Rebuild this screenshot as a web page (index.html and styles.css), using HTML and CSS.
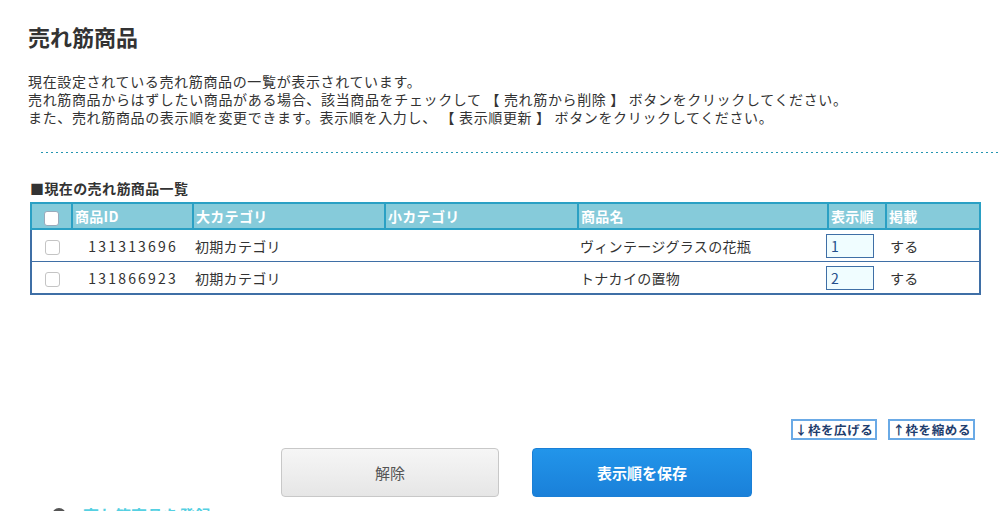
FILE: index.html
```html
<!DOCTYPE html>
<html lang="ja">
<head>
    <meta charset="UTF-8">
    <title>売れ筋商品</title>
    <link rel="stylesheet" href="styles.css">
</head>
<body>

<div class="page">
    <h1>売れ筋商品</h1>

    <p class="intro">
        現在設定されている売れ筋商品の一覧が表示されています。<br>
        売れ筋商品からはずしたい商品がある場合、該当商品をチェックして 【 売れ筋から削除 】 ボタンをクリックしてください。<br>
        また、売れ筋商品の表示順を変更できます。表示順を入力し、 【 表示順更新 】 ボタンをクリックしてください。
    </p>

    <div class="dotted"></div>

    <h2 class="list-title">■現在の売れ筋商品一覧</h2>

    <div class="frame" id="frame">
        <table class="ranking">
            <colgroup>
                <col class="c-check">
                <col class="c-id">
                <col class="c-cat1">
                <col class="c-cat2">
                <col class="c-name">
                <col class="c-order">
                <col class="c-pub">
            </colgroup>
            <thead>
                <tr>
                    <th class="check"><span class="box head"></span></th>
                    <th>商品ID</th>
                    <th>大カテゴリ</th>
                    <th>小カテゴリ</th>
                    <th>商品名</th>
                    <th>表示順</th>
                    <th>掲載</th>
                </tr>
            </thead>
            <tbody>
                <tr>
                    <td class="check"><span class="box"></span></td>
                    <td class="id">131313696</td>
                    <td>初期カテゴリ</td>
                    <td></td>
                    <td>ヴィンテージグラスの花瓶</td>
                    <td class="order"><input type="text" value="1"></td>
                    <td class="pub">する</td>
                </tr>
                <tr>
                    <td class="check"><span class="box"></span></td>
                    <td class="id">131866923</td>
                    <td>初期カテゴリ</td>
                    <td></td>
                    <td>トナカイの置物</td>
                    <td class="order"><input type="text" value="2"></td>
                    <td class="pub">する</td>
                </tr>
            </tbody>
        </table>
    </div>

    <div class="frame-ctrl">
        <button class="small-btn">↓枠を広げる</button>
        <button class="small-btn">↑枠を縮める</button>
    </div>

    <div class="actions">
        <button class="btn btn-gray">解除</button>
        <button class="btn btn-blue">表示順を保存</button>
    </div>

    <div class="next-section">
        <span class="dot"></span>
        <span class="next-title">売れ筋商品を登録</span>
    </div>
</div>

</body>
</html>
```

FILE: styles.css
```css
body {
    font-family: "Noto Sans CJK JP", "Noto Sans", sans-serif;
    margin: 0;
    padding: 0;
    background-color: white;
    color: #333;
    overflow: hidden;
}

.page {
    padding: 0 0 0 28px;
}

h1 {
    margin: 0;
    padding-top: 20px;
    font-size: 22px;
    line-height: 32px;
    font-weight: bold;
    color: #333;
}

.intro {
    margin: 20px 0 0;
    font-size: 14px;
    line-height: 18px;
    letter-spacing: 0.65px;
}

/* 点線の区切り */
.dotted {
    margin: 26px 0 0 13px;
    height: 1px;
    background: repeating-linear-gradient(to right, #2596b0 0 2px, transparent 2px 5px);
}

.list-title {
    margin: 26px 0 0 2px;
    font-size: 14px;
    line-height: 18px;
    font-weight: bold;
    letter-spacing: 0.4px;
}

.frame {
    margin: 5px 0 0 1px;
    padding-left: 1px;
    width: 960px;
    height: 214px;
    overflow: hidden;
}

.ranking {
    width: 949px;
    border-collapse: collapse;
    table-layout: fixed;
    font-size: 14px;
}

.c-check { width: 41px; }
.c-id { width: 121px; }
.c-cat1 { width: 192px; }
.c-cat2 { width: 193px; }
.c-name { width: 250px; }
.c-order { width: 58px; }
.c-pub { width: 94px; }

.ranking th {
    height: 24px;
    padding: 0 2px;
    background-color: #86cbda;
    border: 2px solid #2aa0c4;
    color: white;
    text-align: left;
    font-weight: bold;
    line-height: 22px;
    letter-spacing: 0.3px;
}

.ranking td {
    height: 31px;
    padding: 0 2px;
    border-top: 1px solid #3f6fa6;
    border-bottom: 1px solid #3f6fa6;
    line-height: 20px;
    letter-spacing: 0.3px;
}

.ranking tr td:first-child {
    border-left: 2px solid #3f6fa6;
}

.ranking tr td:last-child {
    border-right: 2px solid #3f6fa6;
}

.ranking tr:last-child td {
    border-bottom: 2px solid #3f6fa6;
}

.ranking .check {
    text-align: center;
    padding: 0;
}

.box {
    display: inline-block;
    width: 13px;
    height: 13px;
    border: 1px solid #c4c4c4;
    border-radius: 3px;
    background: white;
    vertical-align: middle;
}

.box.head {
    border-color: #9ab;
}

.ranking .id {
    text-align: right;
    padding-right: 15px;
    letter-spacing: 2.2px;
}

.ranking .order {
    padding: 0;
}

.ranking input {
    box-sizing: border-box;
    width: 48px;
    height: 24px;
    margin: 0 0 0 -2px;
    padding: 0 4px;
    border: 1px solid #3f6fa6;
    background-color: #f0fdff;
    color: #234f8c;
    font-family: inherit;
    font-size: 14px;
    vertical-align: middle;
}

.ranking .pub {
    padding-left: 4px;
}

.frame-ctrl {
    display: flex;
    justify-content: flex-end;
    gap: 11px;
    width: 947px;
    margin-top: 3px;
}

.small-btn {
    height: 21px;
    padding: 0 2px;
    border: 2px solid #6aaae6;
    background: white;
    color: #1f3e6e;
    font-family: inherit;
    font-size: 12.5px;
    font-weight: bold;
    letter-spacing: 0.6px;
    line-height: 17px;
}

.actions {
    display: flex;
    gap: 33px;
    margin: 8px 0 0 253px;
}

.btn {
    height: 49px;
    border-radius: 4px;
    font-family: inherit;
    font-size: 15px;
    cursor: pointer;
}

.btn-gray {
    width: 218px;
    border: 1px solid #c8c8c8;
    background: linear-gradient(#f6f6f6, #e6e6e6);
    color: #555;
}

.btn-blue {
    width: 220px;
    border: 1px solid #1a7fd6;
    background: linear-gradient(#2295ea, #1a80d9);
    color: white;
    font-weight: bold;
}

.next-section {
    display: flex;
    align-items: center;
    gap: 17px;
    margin: 7px 0 0 24px;
    height: 22px;
}

.dot {
    width: 14px;
    height: 14px;
    border-radius: 50%;
    background-color: #555;
}

.next-title {
    color: #55d0e2;
    font-size: 16px;
    font-weight: bold;
}
```
